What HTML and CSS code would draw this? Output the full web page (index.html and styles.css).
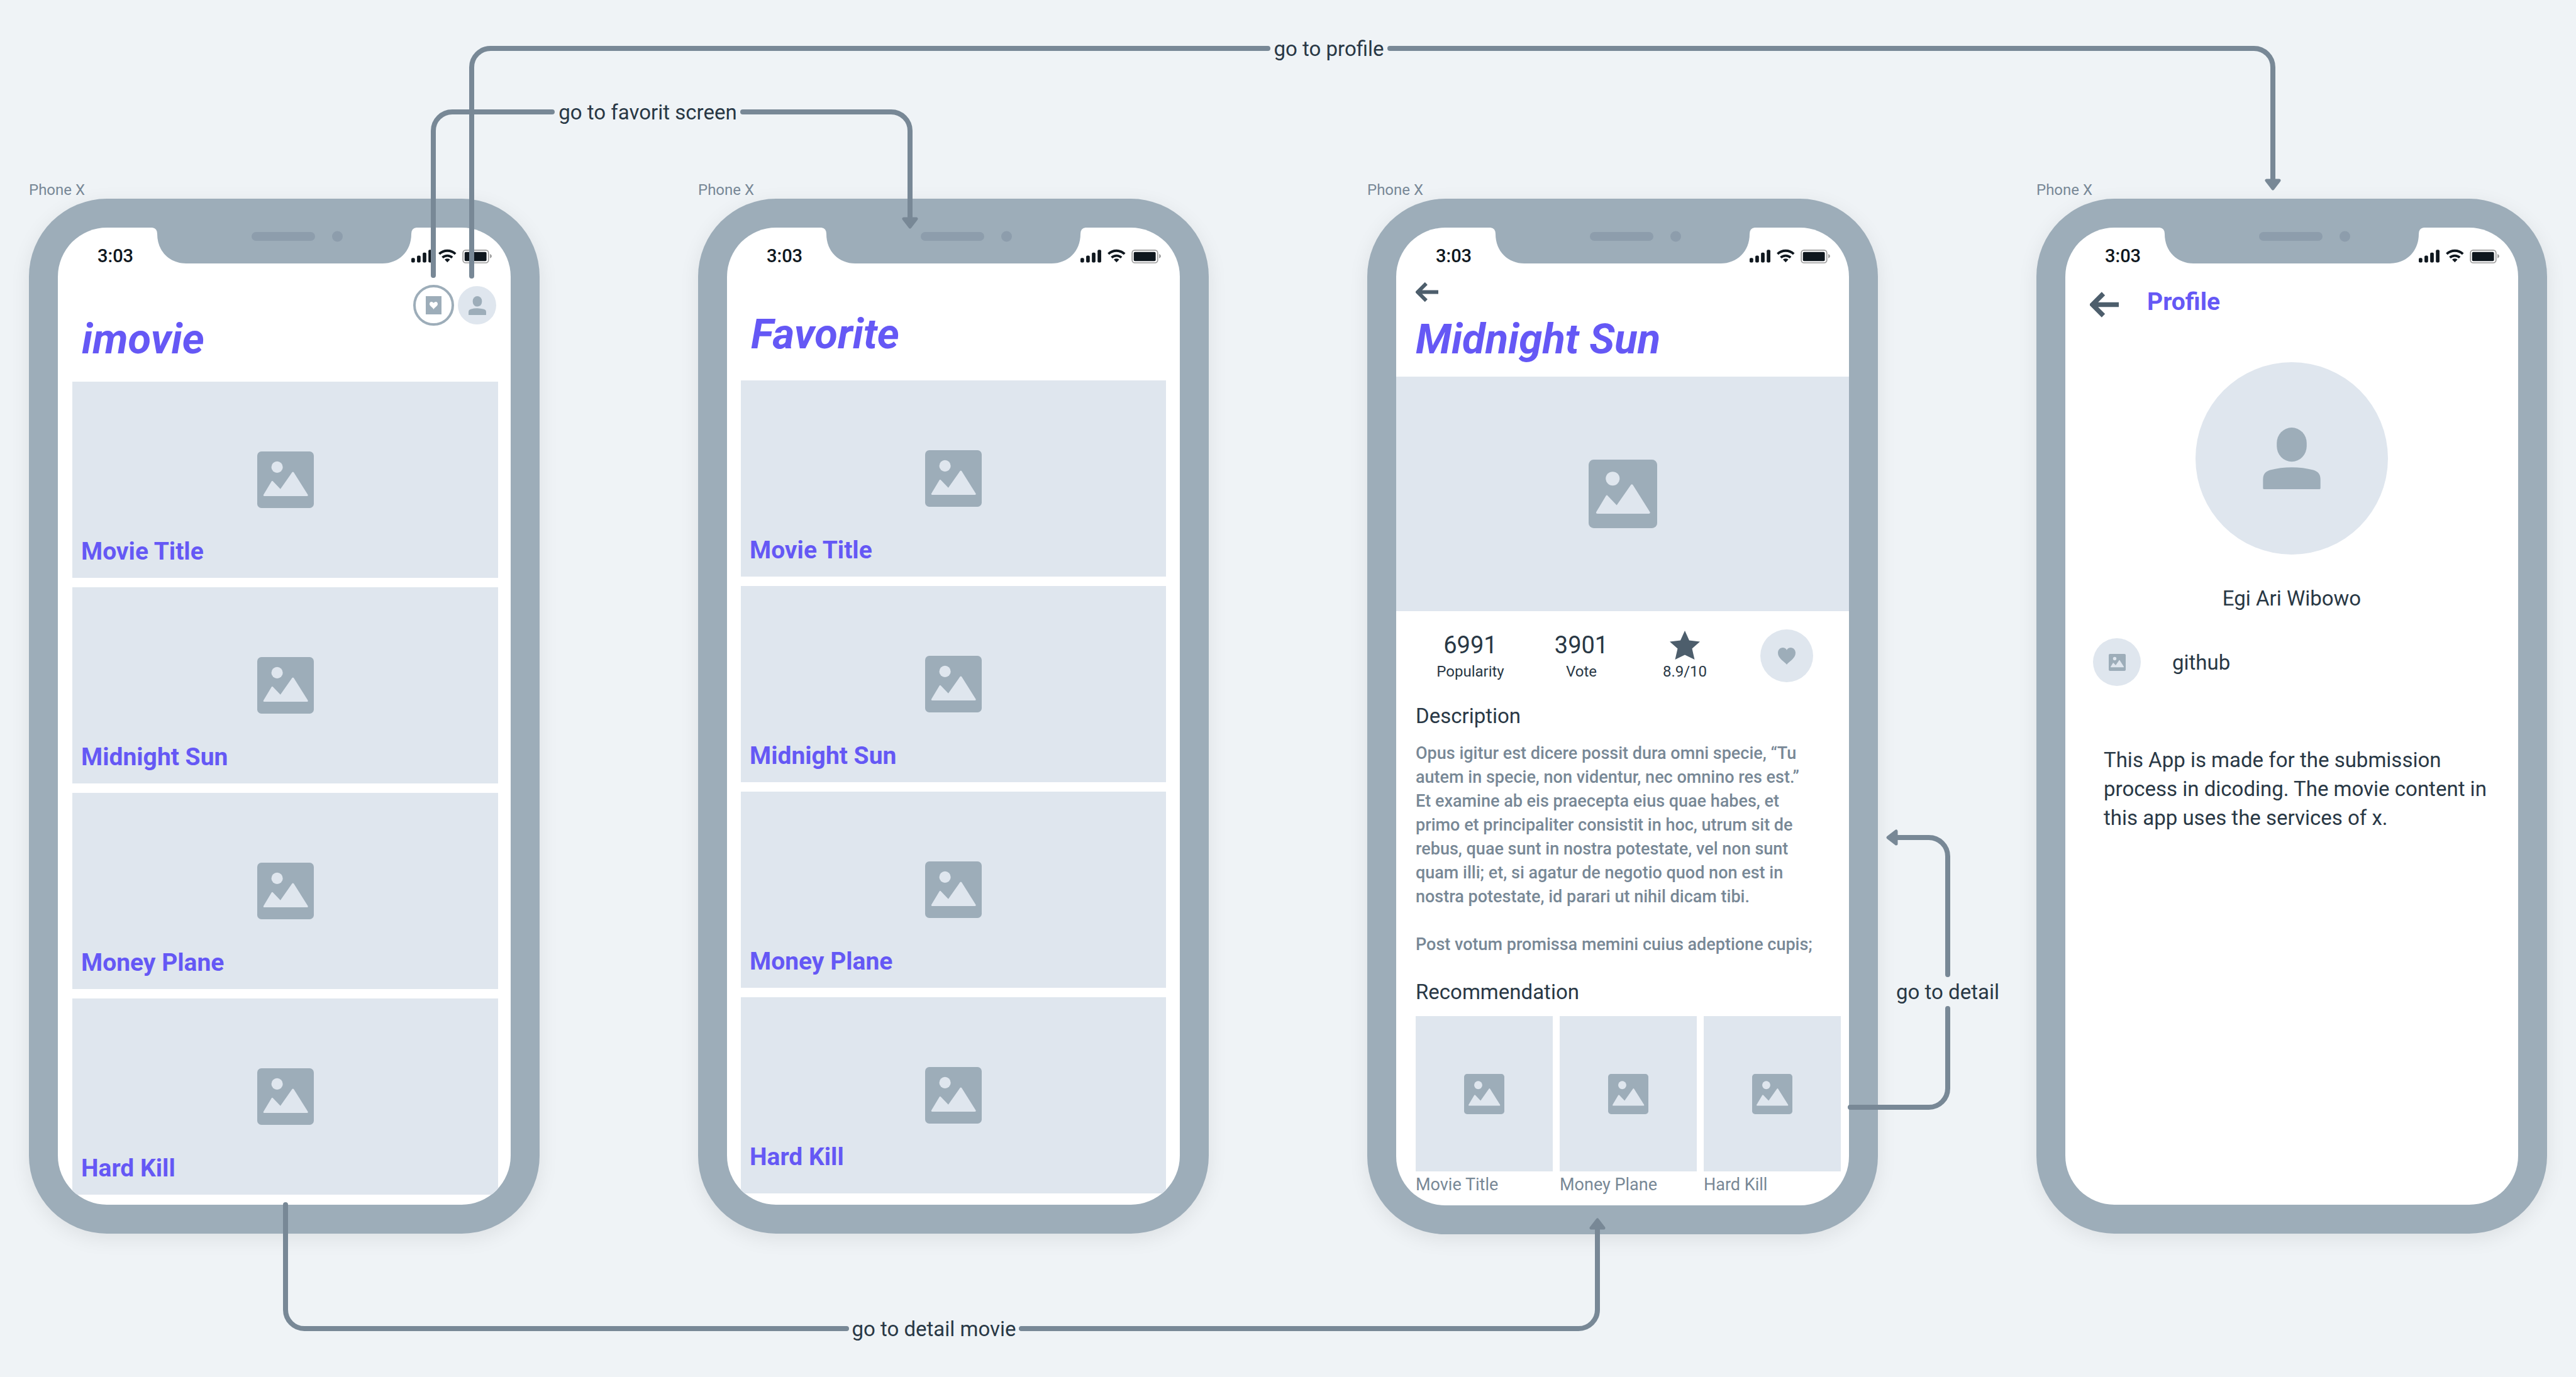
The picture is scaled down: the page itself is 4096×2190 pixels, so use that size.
FILE: index.html
```html
<!DOCTYPE html>
<html lang="en">
<head>
  <meta charset="utf-8">
  <meta name="viewport" content="width=device-width, initial-scale=1">
  <title>imovie wireframe flow</title>
  <link rel="stylesheet" href="styles.css">
</head>
<body>
  <!-- Shared symbols -->
  <svg class="sprite" aria-hidden="true">
    <symbol id="picture" viewBox="0 0 94 94">
      <rect width="94" height="94" rx="7" fill="#9dadb9"/>
      <circle cx="33" cy="26" r="9.5" fill="#dfe6ee"/>
      <path d="M12 74.200Q9.500 74.200 10.500 71.800L23.800 49.600Q25 48 26.200 49.600L38.500 62.500L57.900 34.800Q59.300 33 60.700 34.800L84 71.800Q85 74.200 82.500 74.200Z" fill="#dfe6ee"/>
    </symbol>
    <symbol id="person" viewBox="0 0 96 103">
      <rect x="23" width="50" height="57" rx="25" ry="26" fill="#9dadb9"/>
      <path d="M1.500 103Q0 103 0 101.500V87C0 78 4 73.500 12 71Q29 66.500 48 66.500Q67 66.500 84 71C92 73.500 96 78 96 87V101.500Q96 103 94.500 103Z" fill="#9dadb9"/>
    </symbol>
    <symbol id="heart" viewBox="0 0 28 27">
      <path d="M14 27C11 22.500 0 17.500 0 8.500C0 3.500 3.500 0 7.500 0C10.500 0 13 1.500 14 4C15 1.500 17.500 0 20.500 0C24.500 0 28 3.500 28 8.500C28 17.500 17 22.500 14 27Z"/>
    </symbol>
    <symbol id="back" viewBox="0 0 46 41">
      <path d="M21.500 3L4 20.500L21.500 38M5 20.500H46" fill="none" stroke="#4d5e6c" stroke-width="7.500"/>
    </symbol>
    <symbol id="notch" viewBox="0 0 420 57">
      <path d="M0 0H420Q412 1 412 10C412 38 392 57 366 57H54C28 57 8 38 8 10Q8 1 0 0Z" fill="#9dadb9"/>
      <rect x="158" y="7" width="101" height="14" rx="7" fill="#8d9dac"/>
      <circle cx="294.500" cy="14" r="8.500" fill="#8d9dac"/>
    </symbol>
    <symbol id="signals" viewBox="0 0 134 24">
      <g fill="#0f171e">
        <rect y="15" width="6" height="7.500" rx="2"/>
        <rect x="9.500" y="11" width="6" height="11.500" rx="2"/>
        <rect x="19" y="6" width="6" height="16.500" rx="2"/>
        <rect x="28.500" y="1.300" width="6" height="21.200" rx="2"/>
        <path d="M55.500 17.500Q60 14.500 64.500 17.500L60 22.300Z"/>
        <rect x="88.700" y="5" width="36.500" height="15" rx="2"/>
      </g>
      <path d="M46.500 8.300A19.500 19.500 0 0 1 73.500 8.300M51.800 14.300A12 12 0 0 1 68.200 14.300" fill="none" stroke="#0f171e" stroke-width="4"/>
      <rect x="86" y="2" width="42.500" height="21" rx="4.500" fill="none" stroke="#9b9b9b" stroke-width="1.800"/>
      <path d="M131 8Q134 9.500 134 11.800Q134 14 131 15.600Z" fill="#9b9b9b"/>
    </symbol>
  </svg>

  <main class="board">
    <section class="device">
      <p class="device-name">Phone X</p>
      <div class="phone">
        <svg class="notch"><use href="#notch"/></svg>
        <div class="screen">
          <div class="status"><time>3:03</time><svg class="signals"><use href="#signals"/></svg></div>
          <header class="home-header">
            <h1 class="title">imovie</h1>
            <nav class="actions">
              <button class="round round-outline" aria-label="Favorites">
                <svg width="25" height="29" viewBox="0 0 25 29"><path d="M0 0H25V29H0Z" fill="#9dadb9"/><path d="M12.500 21C11 17.500 6 16 6 12.500C6 10 7.500 9 9 9C10.500 9 12 10 12.500 11C13 10 14.500 9 16 9C17.500 9 19 10 19 12.500C19 16 14 17.500 12.500 21Z" fill="#fff"/></svg>
              </button>
              <button class="round" aria-label="Profile"><svg width="28" height="30"><use href="#person"/></svg></button>
            </nav>
          </header>
          <div class="cards cards-home">
            <a class="card" href="#detail"><svg class="card-icon"><use href="#picture"/></svg><span class="card-label">Movie Title</span></a>
            <a class="card" href="#detail"><svg class="card-icon"><use href="#picture"/></svg><span class="card-label">Midnight Sun</span></a>
            <a class="card" href="#detail"><svg class="card-icon"><use href="#picture"/></svg><span class="card-label">Money Plane</span></a>
            <a class="card" href="#detail"><svg class="card-icon"><use href="#picture"/></svg><span class="card-label">Hard Kill</span></a>
          </div>
        </div>
      </div>
    </section>

    <section class="device">
      <p class="device-name">Phone X</p>
      <div class="phone">
        <svg class="notch"><use href="#notch"/></svg>
        <div class="screen">
          <div class="status"><time>3:03</time><svg class="signals"><use href="#signals"/></svg></div>
          <header class="favorite-header">
            <h2 class="title">Favorite</h2>
          </header>
          <div class="cards">
            <a class="card" href="#detail"><svg class="card-icon"><use href="#picture"/></svg><span class="card-label">Movie Title</span></a>
            <a class="card" href="#detail"><svg class="card-icon"><use href="#picture"/></svg><span class="card-label">Midnight Sun</span></a>
            <a class="card" href="#detail"><svg class="card-icon"><use href="#picture"/></svg><span class="card-label">Money Plane</span></a>
            <a class="card card-last" href="#detail"><svg class="card-icon"><use href="#picture"/></svg><span class="card-label">Hard Kill</span></a>
          </div>
        </div>
      </div>
    </section>

    <section class="device" id="detail">
      <p class="device-name">Phone X</p>
      <div class="phone">
        <svg class="notch"><use href="#notch"/></svg>
        <div class="screen">
          <div class="status"><time>3:03</time><svg class="signals"><use href="#signals"/></svg></div>
          <header class="detail-header">
            <button class="back" aria-label="Back"><svg width="36" height="33"><use href="#back"/></svg></button>
            <h2 class="title">Midnight Sun</h2>
          </header>
          <div class="hero"><svg width="109" height="109"><use href="#picture"/></svg></div>
          <div class="stats">
            <div class="stat"><strong class="stat-value">6991</strong><span class="stat-name">Popularity</span></div>
            <div class="stat"><strong class="stat-value">3901</strong><span class="stat-name">Vote</span></div>
            <div class="stat">
              <svg width="48" height="46" viewBox="0 0 48 46"><path d="M24 0L31 15.500L48 17.500L35.500 28.500L39.500 46L24 38.500L8.500 46L12.500 28.500L0 17.500L17 15.500Z" fill="#4d5e6c"/></svg>
              <span class="stat-name">8.9/10</span>
            </div>
            <button class="round round-large" aria-label="Add to favorites"><svg width="28" height="27" fill="#9dadb9"><use href="#heart"/></svg></button>
          </div>
          <div class="detail-body">
            <h3 class="heading">Description</h3>
            <p class="description">Opus igitur est dicere possit dura omni specie, “Tu<br>autem in specie, non videntur, nec omnino res est.”<br>Et examine ab eis praecepta eius quae habes, et<br>primo et principaliter consistit in hoc, utrum sit de<br>rebus, quae sunt in nostra potestate, vel non sunt<br>quam illi; et, si agatur de negotio quod non est in<br>nostra potestate, id parari ut nihil dicam tibi.<br><br>Post votum promissa memini cuius adeptione cupis;</p>
            <h3 class="heading">Recommendation</h3>
            <div class="recommendations">
              <a class="thumb" href="#detail"><span class="thumb-image"><svg width="64" height="64"><use href="#picture"/></svg></span>Movie Title</a>
              <a class="thumb" href="#detail"><span class="thumb-image"><svg width="64" height="64"><use href="#picture"/></svg></span>Money Plane</a>
              <a class="thumb" href="#detail"><span class="thumb-image"><svg width="64" height="64"><use href="#picture"/></svg></span>Hard Kill</a>
            </div>
          </div>
        </div>
      </div>
    </section>

    <section class="device">
      <p class="device-name">Phone X</p>
      <div class="phone">
        <svg class="notch"><use href="#notch"/></svg>
        <div class="screen">
          <div class="status"><time>3:03</time><svg class="signals"><use href="#signals"/></svg></div>
          <header class="profile-header">
            <button class="back" aria-label="Back"><svg width="46" height="41"><use href="#back"/></svg></button>
            <h2 class="profile-title">Profile</h2>
          </header>
          <div class="profile">
            <div class="avatar"><svg width="92" height="98"><use href="#person"/></svg></div>
            <p class="name">Egi Ari Wibowo</p>
            <a class="account" href="#github"><span class="account-icon"><svg width="27" height="27"><use href="#picture"/></svg></span>github</a>
            <p class="about">This App is made for the submission<br>process in dicoding. The movie content in<br>this app uses the services of x.</p>
          </div>
        </div>
      </div>
    </section>

    <!-- Flow arrows between the screens -->
    <svg class="flow" viewBox="0 0 4096 2190">
      <g class="flow-lines">
        <path d="M750 439V107A30 30 0 0 1 780 77H2016M2210 77H3584A30 30 0 0 1 3614 107V288"/>
        <path d="M689 438V208A30 30 0 0 1 719 178H878M1181 178H1417A30 30 0 0 1 1447 208V348"/>
        <path d="M454 1916V2083A30 30 0 0 0 484 2113H1346M1624 2113H2510A30 30 0 0 0 2540 2083V1954"/>
        <path d="M2942 1761H3067A30 30 0 0 0 3097 1731V1604M3097 1550V1362A30 30 0 0 0 3067 1332H3014"/>
      </g>
      <g class="flow-heads">
        <path d="M3604 287H3624L3614 300Z"/>
        <path d="M1437 348H1457L1447 361Z"/>
        <path d="M2530 1953H2550L2540 1940Z"/>
        <path d="M3015 1322V1342L3002 1332Z"/>
      </g>
      <g class="flow-text">
        <text x="2113" y="89">go to profile</text>
        <text x="1030" y="190">go to favorit screen</text>
        <text x="1485" y="2125">go to detail movie</text>
        <text x="3097" y="1589">go to detail</text>
      </g>
    </svg>
  </main>
</body>
</html>
```
FILE: styles.css
```css
:root {
  --canvas: #eff3f6;
  --frame: #9dadb9;
  --fill: #dfe6ee;
  --line: #788896;
  --ink: #293845;
  --accent: #6558f5;
}

* {
  box-sizing: border-box;
}

body,
h1,
h2,
h3,
p {
  margin: 0;
}

body {
  background: var(--canvas);
  color: var(--ink);
  font-family: Roboto, "Liberation Sans", sans-serif;
}

svg {
  display: block;
}

button {
  padding: 0;
  border: 0;
  background: none;
  cursor: pointer;
}

a {
  color: inherit;
  text-decoration: none;
}

.sprite {
  position: absolute;
  width: 0;
  height: 0;
}

.board {
  position: relative;
  display: grid;
  grid-template-columns: repeat(4, 1fr);
  align-items: start;
  column-gap: 252px;
  min-height: 100vh;
  padding: 288px 46px 0;
}

.device {
  display: grid;
  grid-template-rows: auto 1fr;
  align-self: start;
}

.device-name {
  color: var(--line);
  font-size: 24px;
  line-height: 28px;
}

.phone {
  position: relative;
  display: grid;
  min-height: 1646px;
  padding: 46px;
  border-radius: 124px;
  background: var(--frame);
  box-shadow: 0 8px 32px rgba(0, 0, 0, 0.08);
}

.screen {
  display: flex;
  flex-direction: column;
  overflow: hidden;
  border-radius: 78px;
  background: #fff;
}

.notch {
  position: absolute;
  top: 46px;
  left: calc(50% - 210px);
  width: 420px;
  height: 57px;
}

.status {
  display: flex;
  align-items: center;
  justify-content: space-between;
  height: 80px;
  padding: 10px 30px 0 63px;
  color: #0f171e;
  font-size: 29px;
  font-weight: 500;
}

.signals {
  width: 128px;
  height: 23px;
}

.title {
  color: var(--accent);
  font-size: 67px;
  font-style: italic;
  font-weight: 700;
  line-height: 80px;
}

/* Home and favorites */
.home-header {
  display: flex;
  align-items: flex-start;
  justify-content: space-between;
  height: 165px;
  padding: 11px 23px 0 38px;
}

.home-header .title {
  margin-top: 46px;
}

.actions {
  display: flex;
  align-items: center;
  gap: 6px;
}

.round {
  display: grid;
  place-items: center;
  width: 61px;
  height: 61px;
  border-radius: 50%;
  background: var(--fill);
}

.round-outline {
  width: 65px;
  height: 65px;
  border: 4px solid var(--frame);
  background: #fff;
}

.round-large {
  width: 84px;
  height: 84px;
}

.favorite-header {
  height: 163px;
  padding: 49px 38px 0;
}

.cards {
  display: grid;
  gap: 15px;
  padding: 0 22px 16px;
}

.cards-home {
  padding: 0 20px 16px 23px;
}

.card {
  display: grid;
  height: 312px;
  background: var(--fill);
}

.card > * {
  grid-area: 1 / 1;
}

.card-icon {
  place-self: center;
  width: 90px;
  height: 90px;
}

.card-label {
  align-self: end;
  padding: 0 14px 20px;
  color: var(--accent);
  font-size: 39px;
  font-weight: 700;
  line-height: 44px;
}

.card-last .card-label {
  padding-bottom: 36px;
}

/* Movie detail */
.detail-header {
  height: 157px;
  padding: 6px 31px 0;
}

.detail-header .title {
  margin-top: 14px;
}

.hero {
  display: grid;
  place-items: center;
  height: 373px;
  background: var(--fill);
}

.stats {
  display: grid;
  grid-template-columns: 174fr 179fr 150fr 173fr;
  place-items: center;
  padding: 29px 13px 0 31px;
}

.stat {
  display: grid;
  justify-items: center;
  row-gap: 3px;
}

.stat-value {
  font-size: 38px;
  font-weight: 400;
  line-height: 46px;
}

.stat-name {
  font-size: 24px;
  line-height: 32px;
}

.detail-body {
  padding: 32px 13px 17px 31px;
}

.heading {
  font-size: 33px;
  font-weight: 400;
  line-height: 44px;
}

.description {
  margin: 18px 0 35px;
  color: var(--line);
  font-size: 27px;
  font-weight: 500;
  line-height: 38px;
  white-space: nowrap;
}

.recommendations {
  display: grid;
  grid-template-columns: repeat(3, 1fr);
  gap: 11px;
  margin-top: 16px;
}

.thumb {
  display: grid;
  row-gap: 5px;
  color: var(--line);
  font-size: 27px;
  line-height: 32px;
}

.thumb-image {
  display: grid;
  place-items: center;
  height: 247px;
  background: var(--fill);
}

/* Profile */
.profile-header {
  display: flex;
  align-items: flex-end;
  gap: 45px;
  padding: 13px 39px 0;
}

.profile-title {
  color: var(--accent);
  font-size: 39px;
  line-height: 50px;
}

.profile {
  display: grid;
  padding: 71px 44px 0;
  font-size: 33px;
}

.avatar {
  display: grid;
  place-items: center;
  place-self: center;
  width: 306px;
  height: 306px;
  border-radius: 50%;
  background: var(--fill);
}

.name {
  margin-top: 48px;
  line-height: 44px;
  text-align: center;
}

.account {
  display: flex;
  align-items: center;
  gap: 50px;
  margin-top: 41px;
}

.account-icon {
  display: grid;
  place-items: center;
  width: 76px;
  height: 76px;
  border-radius: 50%;
  background: var(--fill);
}

.about {
  margin-top: 95px;
  padding-left: 17px;
  line-height: 46px;
  white-space: nowrap;
}

/* Flow arrows */
.flow {
  position: absolute;
  top: 0;
  left: 0;
  width: 100%;
  height: auto;
  pointer-events: none;
}

.flow-lines {
  fill: none;
  stroke: var(--line);
  stroke-width: 8;
  stroke-linecap: round;
}

.flow-heads {
  fill: var(--line);
  stroke: var(--line);
  stroke-width: 5;
  stroke-linejoin: round;
}

.flow-text {
  fill: var(--ink);
  font-size: 33px;
  text-anchor: middle;
}
```
